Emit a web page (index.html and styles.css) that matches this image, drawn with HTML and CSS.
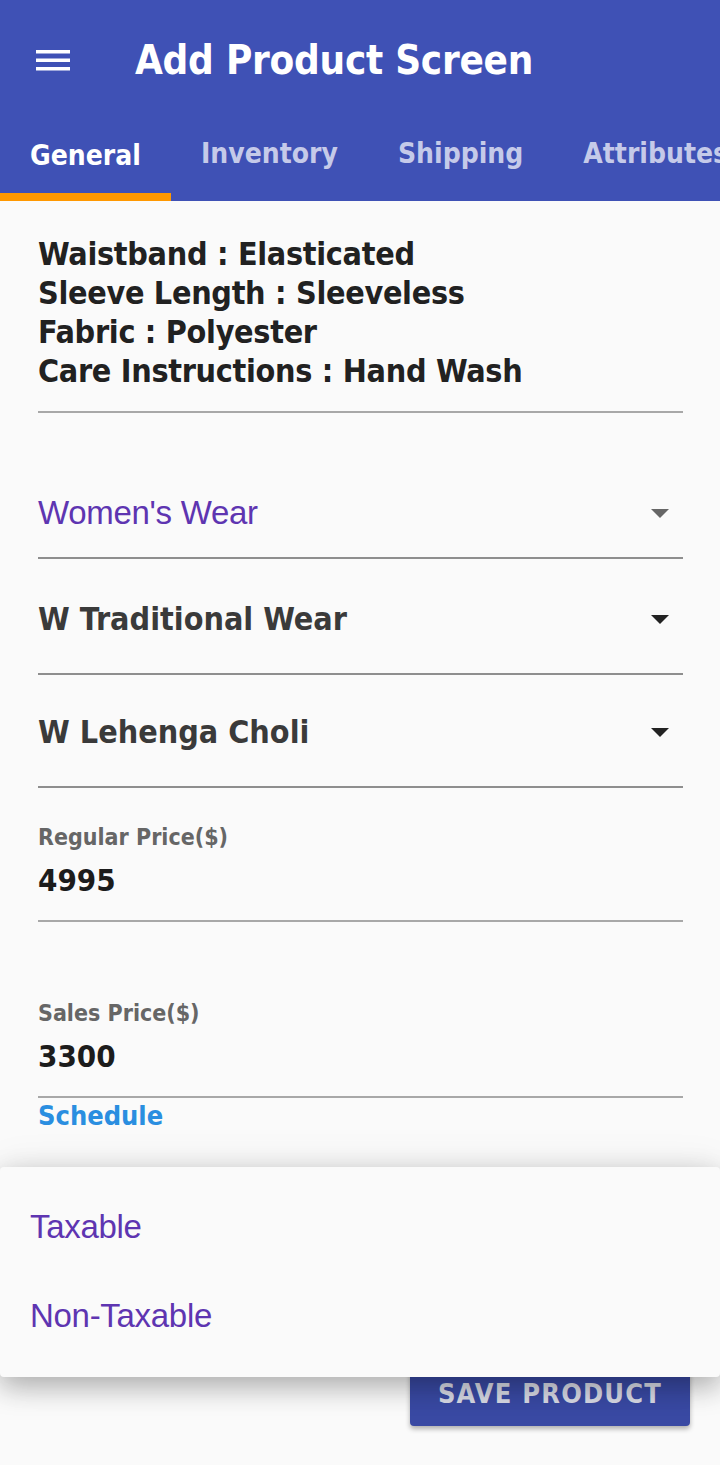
FILE: index.html
```html
<!DOCTYPE html>
<html>
<head>
<meta charset="utf-8">
<link rel="stylesheet" href="styles.css">
</head>
<body>
<div class="screen">
  <header class="appbar">
    <div class="toolbar">
      <svg class="menu-icon" width="36" height="24" viewBox="0 0 36 24">
        <rect x="0" y="2" width="34" height="3.5" fill="#fff"/>
        <rect x="0" y="10.5" width="34" height="3.5" fill="#fff"/>
        <rect x="0" y="19" width="34" height="3.5" fill="#fff"/>
      </svg>
      <h1 class="title">Add Product Screen</h1>
    </div>
    <nav class="tabs">
      <div class="tab active">General</div>
      <div class="tab">Inventory</div>
      <div class="tab">Shipping</div>
      <div class="tab">Attributes</div>
    </nav>
  </header>
  <main class="content">
    <div class="attrs">
      <div>Waistband : Elasticated</div>
      <div>Sleeve Length : Sleeveless</div>
      <div>Fabric : Polyester</div>
      <div>Care Instructions : Hand Wash</div>
    </div>
    <div class="select first">
      <span class="select-value purple">Women's Wear</span>
      <span class="caret grey"></span>
    </div>
    <div class="select second">
      <span class="select-value">W Traditional Wear</span>
      <span class="caret"></span>
    </div>
    <div class="select third">
      <span class="select-value">W Lehenga Choli</span>
      <span class="caret"></span>
    </div>
    <div class="field">
      <div class="field-label">Regular Price($)</div>
      <div class="field-value">4995</div>
    </div>
    <div class="field second">
      <div class="field-label">Sales Price($)</div>
      <div class="field-value">3300</div>
    </div>
    <div class="schedule">Schedule</div>
    <div class="actions">
      <button class="save">SAVE PRODUCT</button>
    </div>
  </main>
  <div class="menu">
    <div class="menu-item">Taxable</div>
    <div class="menu-item">Non-Taxable</div>
  </div>
</div>
</body>
</html>
```
FILE: styles.css
```css
* { box-sizing: border-box; }
html, body { margin: 0; padding: 0; }
body {
  width: 720px;
  height: 1465px;
  background: #f2f2f2;
  font-family: "DejaVu Sans Condensed", "DejaVu Sans", "Liberation Sans", sans-serif;
  overflow: hidden;
}
.screen {
  position: relative;
  width: 720px;
  height: 1465px;
  background: #fafafa;
}
.appbar {
  background: #3f51b5;
  height: 201px;
  display: flex;
  flex-direction: column;
}
.toolbar {
  height: 110px;
  display: flex;
  align-items: center;
  padding-left: 36px;
  padding-top: 10px;
}
.menu-icon { display: block; margin-right: 63px; }
.title {
  margin: 0;
  color: #fff;
  font-size: 40px;
  font-weight: 700;
  letter-spacing: -0.25px;
}
.tabs {
  display: flex;
  height: 91px;
  white-space: nowrap;
  overflow: hidden;
}
.tab {
  color: #c5cae9;
  font-size: 28px;
  font-weight: 700;
  padding: 0 30px 4px 30px;
  display: flex;
  align-items: center;
  height: 91px;
  flex-shrink: 0;
}
.tab.active {
  color: #fff;
  width: 171px;
  border-bottom: 8px solid #ff9800;
  padding-top: 8px;
  padding-bottom: 0;
}
.content {
  padding: 34px 37px 0 38px;
}
.attrs {
  color: #212121;
  font-size: 32px;
  font-weight: 700;
  letter-spacing: -0.3px;
  line-height: 39px;
  padding-bottom: 20px;
  border-bottom: 2px solid #a8a8a8;
}
.select {
  display: flex;
  align-items: center;
  justify-content: space-between;
  border-bottom: 2px solid #8e8e8e;
  padding-right: 14px;
}
.select.first { height: 146px; padding-top: 56px; }
.select.second { height: 116px; padding-top: 6px; }
.select.third { height: 113px; padding-top: 3px; }
.select-value {
  color: #3a3a3a;
  font-size: 32px;
  font-weight: 700;
}
.select-value.purple {
  font-family: "Liberation Sans", Arial, sans-serif;
  font-weight: 400;
  color: #5e35b1;
  font-size: 33px;
  letter-spacing: -0.3px;
}
.caret {
  width: 0; height: 0;
  border-left: 9px solid transparent;
  border-right: 9px solid transparent;
  border-top: 9px solid #222;
}
.caret.grey { border-top-color: #666; }
.field {
  padding-top: 34px;
  height: 134px;
  border-bottom: 2px solid #a8a8a8;
}
.field.second { height: 176px; padding-top: 76px; }
.field-label {
  color: #666;
  font-size: 23px;
  font-weight: 700;
  line-height: 30px;
}
.field-value {
  color: #1c1c1c;
  font-size: 31px;
  font-weight: 700;
  line-height: 44px;
  margin-top: 6px;
}
.schedule {
  color: #2a8ee0;
  font-size: 27px;
  font-weight: 700;
  line-height: 36px;
}
.actions {
  display: flex;
  justify-content: flex-end;
  margin-top: 226px;
  margin-right: -7px;
}
.save {
  width: 280px;
  height: 66px;
  border: none;
  border-radius: 4px;
  background: #3949a3;
  color: #d7d9e4;
  font-family: inherit;
  font-size: 27px;
  font-weight: 700;
  letter-spacing: 1.2px;
  box-shadow: 0 3px 5px rgba(0,0,0,0.3);
  padding: 0;
}
.menu {
  position: absolute;
  left: 0;
  top: 1167px;
  width: 720px;
  height: 210px;
  background: #fafafa;
  border-radius: 4px;
  box-shadow: 0 10px 28px rgba(0,0,0,0.28), 0 0 40px rgba(0,0,0,0.08);
  padding-top: 15px;
}
.menu-item {
  height: 89px;
  display: flex;
  align-items: center;
  padding-left: 30px;
  color: #5e35b1;
  font-family: "Liberation Sans", Arial, sans-serif;
  font-size: 33px;
  letter-spacing: -0.3px;
}
```
